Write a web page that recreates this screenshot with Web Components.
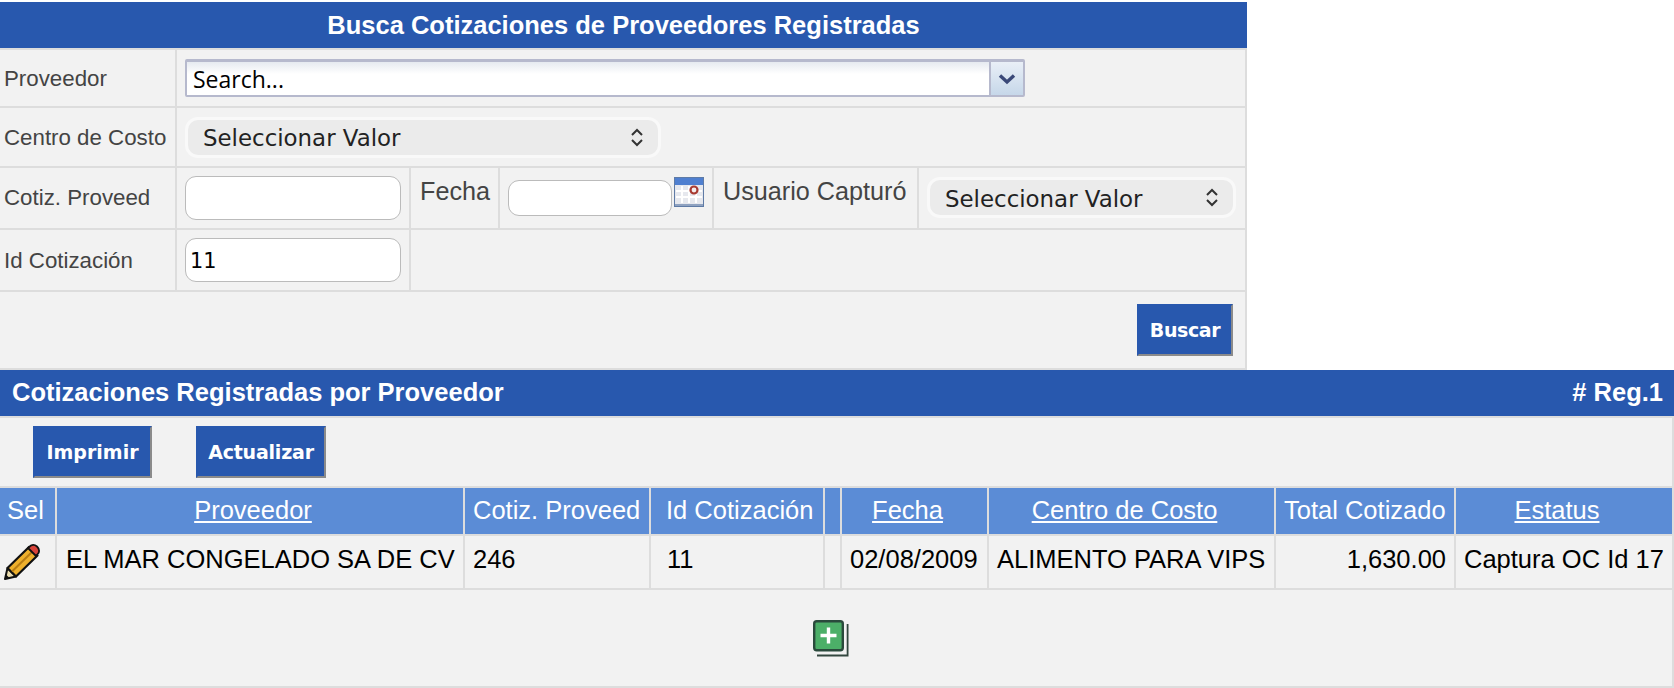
<!DOCTYPE html>
<html lang="es">
<head>
<meta charset="utf-8">
<title>Busca Cotizaciones</title>
<style>
  html, body { margin: 0; padding: 0; background: #fff; }
  body { padding-top: 2px; font-family: "Liberation Sans", Arial, sans-serif; }
  /* cell offsets that differ per column */
  .p4 { padding-left: 4px; }
  .p8 { padding-left: 8px; }
  .p9 { padding-left: 9px; }
</style>
</head>
<body>
<cz-search-panel>
  <cz-title-bar center>Busca Cotizaciones de Proveedores Registradas</cz-title-bar>

  <cz-row style="--cols:175px 1068px;height:58px">
    <cz-cell class="p4"><cz-label>Proveedor</cz-label></cz-cell>
    <cz-cell class="p8"><cz-combo placeholder="Search..."></cz-combo></cz-cell>
  </cz-row>

  <cz-row style="--cols:175px 1068px;height:60px">
    <cz-cell class="p4"><cz-label>Centro de Costo</cz-label></cz-cell>
    <cz-cell class="p8"><cz-select style="width:476px">Seleccionar Valor</cz-select></cz-cell>
  </cz-row>

  <cz-row style="--cols:175px 232px 87px 212px 203px 326px;height:62px">
    <cz-cell class="p4"><cz-label style="padding-top:0">Cotiz. Proveed</cz-label></cz-cell>
    <cz-cell class="p8"><cz-field style="width:216px;height:44px"></cz-field></cz-cell>
    <cz-cell class="p9" style="align-items:flex-start;padding-top:6px"><cz-label big>Fecha</cz-label></cz-cell>
    <cz-cell class="p8"><cz-field style="width:164px;height:36px"></cz-field><cz-calendar-icon></cz-calendar-icon></cz-cell>
    <cz-cell class="p9" style="align-items:flex-start;padding-top:6px"><cz-label big>Usuario Capturó</cz-label></cz-cell>
    <cz-cell style="padding-left:8px"><cz-select style="width:309px;padding-right:14px;margin-top:-1px">Seleccionar Valor</cz-select></cz-cell>
  </cz-row>

  <cz-row style="--cols:175px 232px 834px;height:62px">
    <cz-cell class="p4"><cz-label>Id Cotización</cz-label></cz-cell>
    <cz-cell class="p8"><cz-field style="width:216px;height:44px">11</cz-field></cz-cell>
    <cz-cell></cz-cell>
  </cz-row>

  <cz-row style="--cols:1245px;height:78px">
    <cz-cell style="justify-content:flex-end;padding-right:12px"><cz-button style="width:96px;letter-spacing:-.4px">Buscar</cz-button></cz-cell>
  </cz-row>
</cz-search-panel>

<cz-results-panel>
  <cz-title-bar>Cotizaciones Registradas por Proveedor<span slot="end"># Reg.1</span></cz-title-bar>

  <cz-toolbar>
    <cz-button style="width:119px">Imprimir</cz-button>
    <cz-button style="width:130px;letter-spacing:-.2px">Actualizar</cz-button>
  </cz-toolbar>

  <cz-data-grid>
    <cz-th style="padding-left:7px">Sel</cz-th>
    <cz-th link>Proveedor</cz-th>
    <cz-th style="padding-left:8px">Cotiz. Proveed</cz-th>
    <cz-th style="padding-left:15px">Id Cotización</cz-th>
    <cz-th></cz-th>
    <cz-th link>Fecha</cz-th>
    <cz-th link>Centro de Costo</cz-th>
    <cz-th style="padding-left:8px">Total Cotizado</cz-th>
    <cz-th link>Estatus</cz-th>

    <cz-td style="padding:8px 0 0 4px"><cz-pencil-icon></cz-pencil-icon></cz-td>
    <cz-td style="padding-left:9px">EL MAR CONGELADO SA DE CV</cz-td>
    <cz-td>246</cz-td>
    <cz-td style="padding-left:16px">11</cz-td>
    <cz-td></cz-td>
    <cz-td>02/08/2009</cz-td>
    <cz-td>ALIMENTO PARA VIPS</cz-td>
    <cz-td style="padding-left:0;padding-right:8px;text-align:right">1,630.00</cz-td>
    <cz-td>Captura OC Id 17</cz-td>
  </cz-data-grid>

  <cz-grid-footer><cz-add-icon></cz-add-icon></cz-grid-footer>
</cz-results-panel>

<script>
/**
 * Small helper: every element here is just a shadow root with a style block,
 * so the classes only differ by their template string.
 */
class CzBase extends HTMLElement {
    constructor() {
        super();
        this.attachShadow({ mode: 'open' });
        this.shadowRoot.innerHTML = this.constructor.markup;
    }
}

const define = (name, markup) => {
    customElements.define(name, class extends CzBase {
        static get markup() { return markup; }
    });
};

define('cz-search-panel', `
  <style>:host { display: block; width: 1247px; }</style>
  <slot></slot>`);

define('cz-results-panel', `
  <style>:host { display: block; width: 1674px; }</style>
  <slot></slot>`);

// Blue section bar; "center" puts the title in the middle, slot end is the right hand note
define('cz-title-bar', `
  <style>
    :host {
      display: flex; box-sizing: border-box; height: 48px;
      align-items: center; justify-content: space-between;
      padding: 0 11px 2px 12px;
      background: #2858ae; border-bottom: 2px solid #ddd;
      color: #fff; font: bold 25.5px "Liberation Sans", Arial, sans-serif;
    }
    :host([center]) { justify-content: center; padding: 0; }
  </style>
  <span><slot></slot></span>
  <slot name="end"></slot>`);

// Form row: the 2px gaps show the grey background as cell rules
define('cz-row', `
  <style>
    :host {
      display: grid; box-sizing: border-box;
      grid-template-columns: var(--cols);
      column-gap: 2px;
      padding-right: 2px;
      background: #ddd;
      border-bottom: 2px solid #ddd;
    }
  </style>
  <slot></slot>`);

define('cz-cell', `
  <style>
    :host {
      display: flex; box-sizing: border-box; align-items: center;
      min-width: 0; background: #f2f2f2;
    }
  </style>
  <slot></slot>`);

define('cz-label', `
  <style>
    :host {
      display: block; padding-top: 2px; white-space: nowrap; color: #444;
      font: 22.3px/30px "Liberation Sans", Arial, sans-serif;
    }
    :host([big]) { font-size: 25.2px; }
  </style>
  <slot></slot>`);

define('cz-combo', `
  <style>
    :host {
      display: flex; box-sizing: border-box; width: 840px; height: 38px;
      border: 2px solid #b6b9cd; border-top-width: 3px; border-radius: 2px;
      background: linear-gradient(#e6eaf0, #fff 12px);
      color: #000; font: 23px "Open Sans", sans-serif;
    }
    .text { flex: 1; padding-left: 6px; line-height: 35px; }
    .arrow {
      display: flex; width: 32px; align-items: center; justify-content: center;
      border-left: 2px solid #b6b9cd;
      background: linear-gradient(#e9eff7, #c6d7e9);
    }
  </style>
  <span class="text"></span>
  <span class="arrow">
    <svg width="18" height="12" viewBox="0 0 18 12"><path d="M2 2.500 9 9l7-6.500" fill="none" stroke="#3a4878" stroke-width="3.400"/></svg>
  </span>`);

customElements.whenDefined('cz-combo').then(() => {
    const combo = document.querySelector('cz-combo');
    combo.shadowRoot.querySelector('.text').textContent = combo.getAttribute('placeholder');
});

define('cz-select', `
  <style>
    :host {
      display: flex; box-sizing: border-box; height: 41px;
      align-items: center; justify-content: space-between;
      padding: 0 14px 0 15px;
      border: 3px solid #f9f9f9; border-radius: 13px;
      background: #ebebeb;
      color: #222; font: 22.9px "DejaVu Sans", sans-serif;
    }
    span { padding-top: 2px; }
  </style>
  <span><slot></slot></span>
  <svg width="14" height="19" viewBox="0 0 14 19"><path d="M2 7 7 2l5 5M2 12l5 5 5-5" fill="none" stroke="#333" stroke-width="2"/></svg>`);

define('cz-field', `
  <style>
    :host {
      display: flex; box-sizing: border-box; align-items: center;
      padding: 2px 0 0 4px;
      border: 1px solid #bbb; border-radius: 11px;
      background: #fff; color: #000;
      font: 20.8px "DejaVu Sans", sans-serif;
    }
  </style>
  <slot></slot>`);

define('cz-button', `
  <style>
    :host {
      display: flex; box-sizing: border-box; height: 52px;
      align-items: center; justify-content: center;
      border: 2px solid; border-color: #2858ae #8b8b8b #8b8b8b #2858ae;
      background: #2858ae; color: #fff;
      font: bold 19px "DejaVu Sans", Verdana, sans-serif;
    }
  </style>
  <slot></slot>`);

define('cz-toolbar', `
  <style>
    :host {
      display: flex; box-sizing: border-box; height: 70px; width: 1674px;
      gap: 44px; padding: 8px 0 0 33px;
      background: #f2f2f2;
      border-bottom: 2px solid #ddd; border-right: 2px solid #ddd;
    }
  </style>
  <slot></slot>`);

define('cz-data-grid', `
  <style>
    :host {
      display: grid; box-sizing: border-box;
      grid-template-columns: 55px 406px 184px 172px 15px 145px 285px 178px 216px;
      grid-template-rows: 46px 52px;
      gap: 2px; padding: 0 2px 2px 0;
      background: #ddd;
    }
  </style>
  <slot></slot>`);

define('cz-th', `
  <style>
    :host {
      display: block; box-sizing: border-box; background: #5b8cd6; color: #fff;
      white-space: nowrap;
      font: 25.5px/44px "Liberation Sans", Arial, sans-serif;
    }
    :host([link]) { padding-right: 14px; text-align: center; text-decoration: underline; }
  </style>
  <slot></slot>`);

define('cz-td', `
  <style>
    :host {
      display: block; box-sizing: border-box; background: #f2f2f2; color: #000;
      padding: 8px 0 0 8px; white-space: nowrap;
      font: 25.5px/30px "Liberation Sans", Arial, sans-serif;
    }
  </style>
  <slot></slot>`);

define('cz-grid-footer', `
  <style>
    :host {
      display: flex; box-sizing: border-box; width: 1674px; height: 98px;
      justify-content: center; padding: 30px 10px 0 0;
      background: #f2f2f2;
      border-bottom: 2px solid #ddd; border-right: 2px solid #ddd;
    }
  </style>
  <slot></slot>`);

define('cz-calendar-icon', `
  <style>:host { display: block; width: 30px; height: 30px; margin: 0 0 12px 2px; } svg { display: block; }</style>
  <svg width="30" height="30" viewBox="0 0 30 30">
    <rect x=".5" y=".5" width="29" height="29" fill="#e6e8ee" stroke="#5f7ba6"/>
    <rect x="1" y="1" width="28" height="7" fill="#4f7fd0"/>
    <rect x="1" y="27" width="28" height="2" fill="#8fa2c0"/>
    <path d="M8 9v17M15 9v17M22 9v17M2 14h26M2 20h26" stroke="#fff" stroke-width="2"/>
    <circle cx="20" cy="13" r="3.500" fill="#f4eeee" stroke="#a83a32" stroke-width="2.200"/>
  </svg>`);

define('cz-pencil-icon', `
  <style>:host { display: block; width: 36px; height: 36px; } svg { display: block; }</style>
  <svg width="36" height="36" viewBox="0 0 36 36">
    <path d="M1 35 3.500 24 12 32.500Z" fill="#eadcae" stroke="#111" stroke-width="2" stroke-linejoin="round"/>
    <path d="M1 35 2 30.500 5.500 34Z" fill="#111"/>
    <path d="M3.500 24 25 3 33.500 11.500 12 32.500Z" fill="#eeb02c" stroke="#111" stroke-width="2.200" stroke-linejoin="round"/>
    <path d="M8 27.500 28 8" stroke="#b97d12" stroke-width="2"/>
    <path d="M24 4 27 1.500C29 .5 31 .8 33 2.500 35 4.500 35.500 7 34.500 9L32 12Z" fill="#d8433a" stroke="#111" stroke-width="1.800" stroke-linejoin="round"/>
  </svg>`);

define('cz-add-icon', `
  <style>:host { display: block; width: 36px; height: 37px; } svg { display: block; }</style>
  <svg width="36" height="37" viewBox="0 0 36 37">
    <path d="M34.600 4V35.500H4" fill="none" stroke="#33473f" stroke-width="1.800"/>
    <rect x="1.200" y="1.200" width="28.600" height="29" rx="2.500" fill="#4caf68" stroke="#2a4a3c" stroke-width="2.400"/>
    <path d="M15.500 7.500v16M7.500 15.500h16" stroke="#fff" stroke-width="3.400"/>
  </svg>`);
</script>
</body>
</html>
